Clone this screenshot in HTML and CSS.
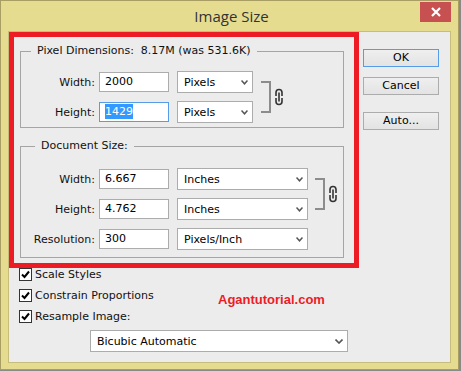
FILE: index.html
```html
<!DOCTYPE html>
<html lang="en">
<head>
  <meta charset="UTF-8" />
  <meta name="viewport" content="width=device-width, initial-scale=1.0" />
  <title>Image Size</title>
  <link rel="stylesheet" href="styles.css">
</head>
<body>
  <div class="window">
    <div class="titlebar">
      <span></span>
      <div class="title">Image Size</div>
      <div class="close">
        <svg width="10" height="10" viewBox="0 0 10 10"><path d="M1 1 L9 9 M9 1 L1 9" stroke="#fff" stroke-width="2.2"/></svg>
      </div>
    </div>

    <div class="client">
      <div class="main">
        <div class="highlight">
          <fieldset class="group group-pixels">
            <legend class="legend-pixels">Pixel Dimensions:&nbsp; 8.17M (was 531.6K)</legend>
            <div class="rows rows-pixels">
              <label class="lbl">Width:</label>
              <div class="field">2000</div>
              <div class="select"><span>Pixels</span><svg class="chev" width="7" height="5" viewBox="0 0 7 5"><path d="M0.5 0.5 L3.5 3.8 L6.5 0.5" fill="none" stroke="#555" stroke-width="1.5"/></svg></div>
              <div class="link">
                <svg width="26" height="52" viewBox="0 0 26 52"><path d="M0 11 H9 V41 H0" fill="none" stroke="#8c8c8c" stroke-width="2"/><path d="M15 25 V21.5 a3 3 0 0 1 6 0 V25 M15 27 V30.5 a3 3 0 0 0 6 0 V27 M18 21.5 V30.5" fill="none" stroke="#333" stroke-width="1.6"/></svg>
              </div>

              <label class="lbl">Height:</label>
              <div class="field focused"><span class="sel">1429</span></div>
              <div class="select"><span>Pixels</span><svg class="chev" width="7" height="5" viewBox="0 0 7 5"><path d="M0.5 0.5 L3.5 3.8 L6.5 0.5" fill="none" stroke="#555" stroke-width="1.5"/></svg></div>
            </div>
          </fieldset>

          <fieldset class="group group-doc">
            <legend class="legend-doc">Document Size:</legend>
            <div class="rows rows-doc">
              <label class="lbl">Width:</label>
              <div class="field">6.667</div>
              <div class="select"><span>Inches</span><svg class="chev" width="7" height="5" viewBox="0 0 7 5"><path d="M0.5 0.5 L3.5 3.8 L6.5 0.5" fill="none" stroke="#555" stroke-width="1.5"/></svg></div>
              <div class="link">
                <svg width="26" height="52" viewBox="0 0 26 52"><path d="M0 11 H9 V41 H0" fill="none" stroke="#8c8c8c" stroke-width="2"/><path d="M15 25 V21.5 a3 3 0 0 1 6 0 V25 M15 27 V30.5 a3 3 0 0 0 6 0 V27 M18 21.5 V30.5" fill="none" stroke="#333" stroke-width="1.6"/></svg>
              </div>

              <label class="lbl">Height:</label>
              <div class="field">4.762</div>
              <div class="select"><span>Inches</span><svg class="chev" width="7" height="5" viewBox="0 0 7 5"><path d="M0.5 0.5 L3.5 3.8 L6.5 0.5" fill="none" stroke="#555" stroke-width="1.5"/></svg></div>

              <label class="lbl">Resolution:</label>
              <div class="field">300</div>
              <div class="select"><span>Pixels/Inch</span><svg class="chev" width="7" height="5" viewBox="0 0 7 5"><path d="M0.5 0.5 L3.5 3.8 L6.5 0.5" fill="none" stroke="#555" stroke-width="1.5"/></svg></div>
            </div>
          </fieldset>
        </div>

        <div class="buttons">
          <div class="btn default">OK</div>
          <div class="btn">Cancel</div>
          <div class="btn btn-auto">Auto...</div>
        </div>
      </div>

      <div class="options">
        <div class="checks">
          <div class="check"><span class="box"><svg width="11" height="11" viewBox="0 0 11 11"><path d="M2 5.5 L4.5 8 L9 2.5" fill="none" stroke="#000" stroke-width="2"/></svg></span>Scale Styles</div>
          <div class="check"><span class="box"><svg width="11" height="11" viewBox="0 0 11 11"><path d="M2 5.5 L4.5 8 L9 2.5" fill="none" stroke="#000" stroke-width="2"/></svg></span>Constrain Proportions</div>
          <div class="check"><span class="box"><svg width="11" height="11" viewBox="0 0 11 11"><path d="M2 5.5 L4.5 8 L9 2.5" fill="none" stroke="#000" stroke-width="2"/></svg></span>Resample Image:</div>
        </div>
        <div class="watermark">Agantutorial.com</div>
      </div>

      <div class="select select-method"><span>Bicubic Automatic</span><svg class="chev" width="8" height="5" viewBox="0 0 8 5"><path d="M0.5 0.5 L4 4 L7.5 0.5" fill="none" stroke="#555" stroke-width="1.6"/></svg></div>
    </div>
  </div>
</body>
</html>
```

FILE: styles.css
```css
body {
  margin: 0;
  background-color: #8a8a8a;
  font-family: "DejaVu Sans", sans-serif;
  font-size: 11px;
  color: #111;
}
.window {
  width: 459px;
  height: 370px;
  box-sizing: border-box;
  background-color: #e6dc90;
  border: 1px solid #a89e63;
  padding: 0 7px 6px 7px;
}
.titlebar {
  height: 30px;
  display: grid;
  grid-template-columns: 1fr auto 1fr;
}
.title {
  font-family: "Open Sans", sans-serif;
  font-size: 15px;
  color: #333;
  line-height: 31px;
  margin-left: 4px;
}
.close {
  justify-self: end;
  width: 31px;
  height: 20px;
  margin-top: 1px;
  background-color: #c75050;
  display: flex;
  align-items: center;
  justify-content: center;
}
.client {
  height: 332px;
  box-sizing: border-box;
  border: 1px solid #c6bc7c;
  background-color: #ececec;
}
.main {
  display: flex;
}
.highlight {
  width: 350px;
  height: 236px;
  box-sizing: border-box;
  border: 5px solid #ed1c24;
  padding: 7px 10px 0 6px;
}
fieldset.group {
  margin: 0;
  padding: 0;
  border: 1px solid #a5a5a5;
  width: 324px;
  box-sizing: border-box;
}
legend {
  line-height: 14px;
  padding: 0 6px;
}
.legend-pixels {
  margin-left: 10px;
}
.legend-doc {
  margin-left: 14px;
}
.group-pixels {
  padding: 13px 0 4px 0 !important;
}
.group-doc {
  margin-top: 11px !important;
  padding: 15px 0 7px 0 !important;
}
.rows {
  display: grid;
  grid-auto-rows: 22px;
  row-gap: 8px;
  align-items: center;
}
.rows-pixels {
  grid-template-columns: 78px 78px 84px auto;
}
.rows-doc {
  grid-template-columns: 78px 78px 138px auto;
}
.lbl {
  text-align: right;
  padding-right: 4px;
}
.field {
  width: 70px;
  height: 20px;
  box-sizing: border-box;
  border: 1px solid #acacac;
  background-color: #fff;
  padding-left: 5px;
  line-height: 18px;
  color: #000;
}
.field.focused {
  border-color: #569de5;
}
.sel {
  background-color: #3399ff;
  color: #fff;
  padding: 1px 0;
}
.select {
  height: 22px;
  box-sizing: border-box;
  border: 1px solid #acacac;
  background-color: #fff;
  display: flex;
  align-items: center;
  justify-content: space-between;
  padding: 0 4px 0 6px;
  color: #000;
}
.rows-pixels .select {
  width: 76px;
}
.rows-doc .select {
  width: 131px;
}
.link {
  grid-column: 4;
  grid-row: 1 / span 2;
  align-self: stretch;
  height: 52px;
}
.link svg {
  display: block;
}
.buttons {
  display: flex;
  flex-direction: column;
  margin: 17px 0 0 4px;
}
.btn {
  width: 76px;
  height: 18px;
  box-sizing: border-box;
  border: 1px solid #acacac;
  background: linear-gradient(#efefef, #e3e3e3);
  text-align: center;
  line-height: 16px;
  color: #000;
  margin-bottom: 10px;
}
.btn.default {
  border-color: #569de5;
}
.btn-auto {
  margin-top: 7px;
}
.options {
  display: flex;
  margin-top: -4px;
}
.checks {
  width: 199px;
  padding-left: 10px;
  box-sizing: border-box;
}
.check {
  height: 21px;
  display: flex;
  align-items: center;
}
.box {
  width: 13px;
  height: 13px;
  box-sizing: border-box;
  border: 1px solid #333;
  background-color: #fff;
  margin-right: 3px;
  display: flex;
  align-items: center;
  justify-content: center;
}
.watermark {
  margin: 28px 0 0 10px;
  font-family: "Liberation Sans", Arial, sans-serif;
  font-weight: bold;
  font-size: 13px;
  line-height: 16px;
  color: #ed1c24;
}
.select-method {
  width: 258px;
  margin: 3px 0 0 81px;
}
```
